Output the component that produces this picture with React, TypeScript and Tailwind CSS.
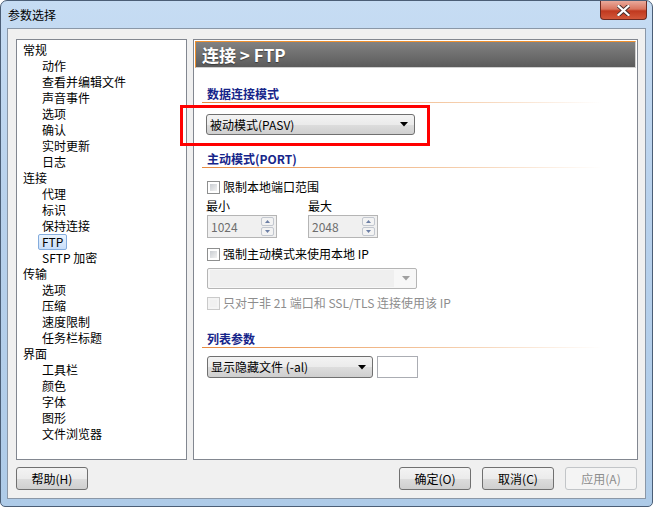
import React from "react";

const tree: [string, number][] = [
  ["常规", 0], ["动作", 1], ["查看并编辑文件", 1], ["声音事件", 1], ["选项", 1], ["确认", 1], ["实时更新", 1], ["日志", 1],
  ["连接", 0], ["代理", 1], ["标识", 1], ["保持连接", 1], ["FTP", 1], ["SFTP 加密", 1],
  ["传输", 0], ["选项", 1], ["压缩", 1], ["速度限制", 1], ["任务栏标题", 1],
  ["界面", 0], ["工具栏", 1], ["颜色", 1], ["字体", 1], ["图形", 1], ["文件浏览器", 1],
];

function Check({ disabled }: { disabled?: boolean }) {
  return (
    <span
      className={`w-[13px] h-[13px] shrink-0 border p-[2px] ${
        disabled ? "border-[#cacaca] bg-[#f4f4f4]" : "border-[#8e8f8f] bg-white"
      }`}
    >
      <span
        className={`block w-full h-full ${
          disabled ? "bg-[#f0f0f0]" : "bg-[linear-gradient(135deg,#c9cdd2,#f2f2f2)]"
        }`}
      />
    </span>
  );
}

function Section({ title }: { title: string }) {
  return (
    <div className="flex flex-col">
      <div className="h-[16px] leading-[16px] pl-[5px] font-bold text-[12px] text-[#16258a]">{title}</div>
      <div className="h-[1px] w-[400px] bg-[linear-gradient(to_right,#e8893f,#f4c9a4_60%,#ffffff)]" />
    </div>
  );
}

function Arrow({ color = "#000" }: { color?: string }) {
  return (
    <svg width="8" height="5" viewBox="0 0 8 5">
      <path d="M0 0H8L4 4.5Z" fill={color} />
    </svg>
  );
}

function Combo({ text, w, h = 21 }: { text: string; w: number; h?: number }) {
  return (
    <div
      className="flex items-center justify-between border border-[#707070] rounded-[3px] bg-[linear-gradient(to_bottom,#f3f3f3_0%,#ebebeb_50%,#dddddd_51%,#cfcfcf_100%)] pl-[3px] pr-[6px] text-[12px] text-black"
      style={{ width: w, height: h }}
    >
      <span className="leading-[16px]">{text}</span>
      <Arrow />
    </div>
  );
}

function Spin({ value }: { value: string }) {
  return (
    <div className="w-[70px] h-[23px] border border-[#b5b5b5] bg-[#f0f0f0] flex items-stretch">
      <span className="flex-1 pl-[3px] leading-[21px] text-[12px] text-[#6d6d6d]">{value}</span>
      <div className="w-[13px] my-[1px] mr-[2px] flex flex-col gap-[1px]">
        <div className="flex-1 border border-[#c2c7cf] rounded-[2px] bg-[#f3f3f3] flex items-center justify-center">
          <svg width="5" height="3" viewBox="0 0 5 3"><path d="M0 3H5L2.5 0Z" fill="#6c7fa5" /></svg>
        </div>
        <div className="flex-1 border border-[#c2c7cf] rounded-[2px] bg-[#f3f3f3] flex items-center justify-center">
          <svg width="5" height="3" viewBox="0 0 5 3"><path d="M0 0H5L2.5 3Z" fill="#6c7fa5" /></svg>
        </div>
      </div>
    </div>
  );
}

function Btn({ label, disabled }: { label: string; disabled?: boolean }) {
  return (
    <div
      className={`w-[72px] h-[23px] rounded-[3px] border flex items-center justify-center text-[12px] ${
        disabled
          ? "border-[#c2c5c8] bg-[#f4f4f4] text-[#8d8d8d]"
          : "border-[#707070] bg-[linear-gradient(to_bottom,#f3f3f3_0%,#ebebeb_50%,#dddddd_51%,#cfcfcf_100%)] text-black"
      }`}
    >
      {label}
    </div>
  );
}

export default function App() {
  return (
    <div className="w-[653px] h-[507px] bg-white font-['Noto_Sans_CJK_SC',sans-serif] text-[12px]">
      <div className="w-full h-full rounded-t-[7px] rounded-b-[5px] border border-[#4b5e76] bg-[linear-gradient(to_bottom,#c6dcf3,#b8d1ec_40%,#aecbe8)] flex flex-col">
        {/* title bar */}
        <div className="h-[27px] flex items-start justify-between pl-[7px] pr-[5px]">
          <span className="mt-[6px] leading-[16px] text-black">参数选择</span>
          <div className="w-[47px] h-[19px] rounded-b-[4px] border border-t-0 border-[#6b2a22] bg-[linear-gradient(to_bottom,#e9a99b,#d9755f_45%,#c0391f_55%,#d2573a)] flex items-center justify-center">
            <svg width="13" height="11" viewBox="0 0 13 11">
              <path d="M1.5 1L11.5 10M11.5 1L1.5 10" stroke="#3d2a2a" strokeWidth="4" strokeLinecap="square" />
              <path d="M1.5 1L11.5 10M11.5 1L1.5 10" stroke="#ffffff" strokeWidth="2.2" strokeLinecap="square" />
            </svg>
          </div>
        </div>

        {/* client */}
        <div className="mx-[6px] h-[471px] border border-[#8a97a7] bg-[#f0f0f0] flex flex-col pl-[8px] pr-[7px] pt-[10px]">
          <div className="flex gap-[6px] h-[421px]">
            {/* tree */}
            <div className="w-[171px] h-full border border-[#828790] bg-white pt-[2px] pl-[6px] flex flex-col">
              {tree.map(([t, lvl], i) => (
                <div key={i} className={`h-[16px] leading-[16px] flex ${lvl ? "pl-[19px]" : ""}`}>
                  {t === "FTP" ? (
                    <span className="-ml-[4px] px-[3px] border border-[#84acdd] rounded-[2px] bg-[linear-gradient(to_bottom,#eaf3fd,#c9def9)] leading-[14px]">
                      {t}
                    </span>
                  ) : (
                    <span>{t}</span>
                  )}
                </div>
              ))}
            </div>

            {/* right panel */}
            <div className="w-[445px] h-full border border-[#828790] bg-white p-[1px] flex flex-col">
              <div className="h-[27px] border-t border-l border-[#f0902c] border-r border-b border-r-[#d0d0d0] border-b-[#d0d0d0] bg-[linear-gradient(to_bottom,#828282,#5b5b5b)] pl-[6px] flex items-center">
                <span className="text-white font-bold text-[17px] leading-[20px] [text-shadow:0_1px_1px_rgba(0,0,0,0.4)]">
                  连接 &gt; FTP
                </span>
              </div>

              <div className="pl-[7px] flex flex-col">
                <div className="mt-[18px]">
                  <Section title="数据连接模式" />
                </div>
                <div className="mt-[11px] ml-[4px] relative w-[209px]">
                  <Combo text="被动模式(PASV)" w={209} />
                  <div className="absolute left-[-26px] top-[-9px] w-[250px] h-[41px] border-[3px] border-[#ff0000]" />
                </div>

                <div className="mt-[16px]">
                  <Section title="主动模式(PORT)" />
                </div>
                <div className="mt-[11px] ml-[5px] h-[16px] flex items-center gap-[3px]">
                  <Check />
                  <span className="leading-[16px]">限制本地端口范围</span>
                </div>
                <div className="mt-[3px] ml-[4px] h-[16px] flex">
                  <span className="w-[102px] leading-[16px]">最小</span>
                  <span className="leading-[16px]">最大</span>
                </div>
                <div className="mt-[1px] ml-[5px] flex gap-[31px]">
                  <Spin value="1024" />
                  <Spin value="2048" />
                </div>
                <div className="mt-[8px] ml-[5px] h-[16px] flex items-center gap-[3px]">
                  <Check />
                  <span className="leading-[16px]">强制主动模式来使用本地 IP</span>
                </div>
                <div className="mt-[6px] ml-[5px] w-[210px] h-[21px] border border-[#b5b5b5] rounded-[2px] bg-[#f7f7f7] flex items-center pl-[2px] pr-[6px] gap-[8px]">
                  <div className="flex-1 h-[17px] bg-[#efefef]" />
                  <Arrow color="#a0a0a0" />
                </div>
                <div className="mt-[6px] ml-[5px] h-[16px] flex items-center gap-[3px] text-[#8d8d8d]">
                  <Check disabled />
                  <span className="leading-[16px]">只对于非 21 端口和 SSL/TLS 连接使用该 IP</span>
                </div>

                <div className="mt-[20px]">
                  <Section title="列表参数" />
                </div>
                <div className="mt-[8px] ml-[5px] flex gap-[4px]">
                  <Combo text="显示隐藏文件 (-al)" w={166} h={22} />
                  <div className="w-[41px] h-[22px] border border-[#abadb3] bg-white" />
                </div>
              </div>
            </div>
          </div>

          {/* buttons */}
          <div className="mt-[7px] flex items-center">
            <div>
              <Btn label="帮助(H)" />
            </div>
            <div className="ml-auto mr-[1px] flex gap-[11px]">
              <Btn label="确定(O)" />
              <Btn label="取消(C)" />
              <Btn label="应用(A)" disabled />
            </div>
          </div>
        </div>
      </div>
    </div>
  );
}
